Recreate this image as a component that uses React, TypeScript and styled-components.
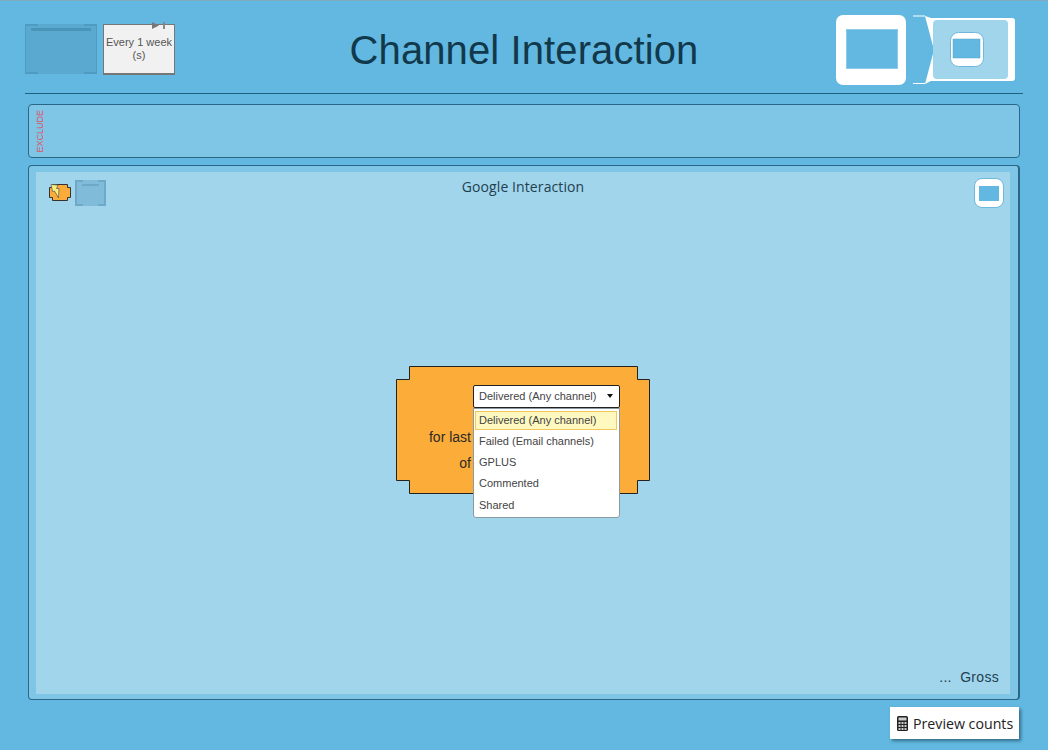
import * as React from "react";
import styled, { createGlobalStyle } from "styled-components";

const MENU_ITEMS = [
  "Delivered (Any channel)",
  "Failed (Email channels)",
  "GPLUS",
  "Commented",
  "Shared",
];

// corner brackets of the empty drop targets
const brackets = (color: string, tick: number, size: number) => `
  background-image:
    linear-gradient(${color}, ${color}), linear-gradient(${color}, ${color}),
    linear-gradient(${color}, ${color}), linear-gradient(${color}, ${color});
  background-repeat: no-repeat;
  background-size: ${tick}px ${size}px;
  background-position: 0 0, 100% 0, 0 100%, 100% 100%;
`;

export default function App() {
  return (
    <Page>
      <GlobalStyle />
      <Header>
        <HeaderLeft>
          <DropBox>
            <DropBoxLine />
          </DropBox>
          <ScheduleCard>
            <ScheduleMarks viewBox="0 0 16 8">
              <path d="M0 0 L7 3.5 L0 7 Z" fill="#777" />
              <rect x="11" y="0" width="2" height="7" fill="#888" />
            </ScheduleMarks>
            Every 1 week
            <br />
            (s)
          </ScheduleCard>
        </HeaderLeft>
        <Title>Channel Interaction</Title>
        <HeaderRight>
          <ViewSquare>
            <ViewSquareInner />
          </ViewSquare>
          <NestedView viewBox="0 0 102 70">
            <path d="M0 1 H12 M0 68.5 H12" stroke="#fff" strokeWidth="1.2" fill="none" />
            <path d="M12 1 L18 3 H99 Q102 3 102 6 V63 Q102 66 99 66 H18 L12 69 L21 35 Z" fill="#fff" />
            <rect x="20" y="5" width="75" height="59" rx="4" fill="#a1d5ec" />
            <rect x="37.5" y="17.5" width="33" height="34" rx="8" fill="#fff" stroke="#6fb8dc" />
            <rect x="40" y="24" width="27" height="19" fill="#62b8e0" stroke="#5aa6cc" strokeWidth="0.5" />
          </NestedView>
        </HeaderRight>
      </Header>

      <ExcludePanel>
        <ExcludeLabel>EXCLUDE</ExcludeLabel>
      </ExcludePanel>

      <MainPanel>
        <Canvas>
          <CanvasHeader>
            <CanvasTools>
              <svg width="25" height="22" viewBox="0 0 25 22">
                <path
                  d="M4.5 2.5 H19.5 V5.5 H22.5 V15.5 H19.5 V18.5 H4.5 V15.5 H1.5 V5.5 H4.5 Z"
                  fill="#fbab39"
                  stroke="#333"
                />
                <path d="M3 2.5 L10 3 L8.5 6.5 L11 6.5 L10.5 16 L6.5 9 L4.5 9.5 Z" fill="#f7ee7e" stroke="#555" strokeWidth="0.7" />
              </svg>
              <MiniDropBox>
                <MiniDropBoxLine />
              </MiniDropBox>
            </CanvasTools>
            <CanvasTitle>Google Interaction</CanvasTitle>
            <ExpandButton>
              <ExpandButtonInner />
            </ExpandButton>
          </CanvasHeader>

          <CanvasBody>
            <Block>
              <BlockShape viewBox="0 0 254 128">
                <path
                  d="M13.5 0.5 H241.5 V13.5 H253.5 V114.5 H241.5 V127.5 H13.5 V114.5 H0.5 V13.5 H13.5 Z"
                  fill="#fcad39"
                  stroke="#222"
                />
              </BlockShape>
              <BlockGrid>
                <span />
                <SelectWrap>
                  <SelectBox>
                    Delivered (Any channel)
                    <Caret />
                  </SelectBox>
                  <Menu>
                    {MENU_ITEMS.map((item, index) => (
                      <MenuItem key={item} $active={index === 0}>
                        {item}
                      </MenuItem>
                    ))}
                  </Menu>
                </SelectWrap>
                <BlockLabel>for last</BlockLabel>
                <span />
                <BlockLabel>of</BlockLabel>
                <span />
              </BlockGrid>
            </Block>
          </CanvasBody>

          <CanvasFooter>...&nbsp; Gross</CanvasFooter>
        </Canvas>
      </MainPanel>

      <Footer>
        <PreviewButton>
          <svg width="11" height="15" viewBox="0 0 11 15">
            <rect width="11" height="15" rx="1.5" fill="#222" />
            <rect x="1.5" y="1.5" width="8" height="3" fill="#ccc" />
            {[0, 1, 2].map((col) =>
              [0, 1, 2].map((row) => (
                <rect
                  key={`${col}-${row}`}
                  x={1.5 + col * 3}
                  y={6 + row * 3}
                  width="2"
                  height="2"
                  fill="#ccc"
                />
              ))
            )}
          </svg>
          Preview counts
        </PreviewButton>
      </Footer>
    </Page>
  );
}

const GlobalStyle = createGlobalStyle`
  html, body {
    margin: 0;
    padding: 0;
    background: #62b8e0;
    overflow: hidden;
  }
  * {
    box-sizing: border-box;
  }
`;

const Page = styled.div`
  width: 1048px;
  height: 750px;
  display: flex;
  flex-direction: column;
  background: #62b8e0;
  border-top: 1px solid #7fa9bd;
  font-family: "Liberation Sans", Arial, sans-serif;
`;

const Header = styled.header`
  width: 998px;
  height: 93px;
  margin-left: 25px;
  flex: none;
  display: grid;
  grid-template-columns: 1fr auto 1fr;
  border-bottom: 1px solid #1f5f7f;
`;

const HeaderLeft = styled.div`
  display: flex;
  gap: 6px;
  padding-top: 23px;
  align-items: flex-start;
`;

const DropBox = styled.div`
  width: 72px;
  height: 50px;
  padding: 4px 5px;
  background-color: #5aa9d0;
  border-left: 1px solid #4f9cc2;
  border-right: 1px solid #4f9cc2;
  ${brackets("#4f9cc2", 12, 2)}
`;

const DropBoxLine = styled.div`
  height: 3px;
  background: #4a94b8;
`;

const ScheduleCard = styled.div`
  position: relative;
  width: 72px;
  height: 51px;
  padding-top: 11px;
  background: #f1f1f1;
  border: 1px solid #777;
  border-bottom-width: 2px;
  color: #555;
  font-size: 11px;
  line-height: 13px;
  text-align: center;
  white-space: nowrap;
`;

const ScheduleMarks = styled.svg`
  position: absolute;
  top: -3px;
  left: 48px;
  width: 16px;
  height: 8px;
`;

const Title = styled.h1`
  margin: 27px 0 0;
  font-size: 40px;
  font-weight: 400;
  line-height: 44px;
  letter-spacing: 0.1px;
  color: #12384c;
  text-align: center;
`;

const HeaderRight = styled.div`
  justify-self: end;
  display: flex;
  gap: 7px;
  padding: 14px 8px 0 0;
  align-items: flex-start;
`;

const ViewSquare = styled.div`
  width: 70px;
  height: 70px;
  padding: 14px 8px 15px 10px;
  background: #fff;
  border-radius: 7px;
`;

const ViewSquareInner = styled.div`
  width: 52px;
  height: 40px;
  background: #62b8e0;
  box-shadow: 0 0 0 1px #8ccbe8 inset;
`;

const NestedView = styled.svg`
  width: 102px;
  height: 70px;
`;

const ExcludePanel = styled.section`
  width: 992px;
  height: 54px;
  margin: 10px 0 0 28px;
  flex: none;
  padding: 5px 0 0 6px;
  background: #7fc5e6;
  border: 1px solid #2a6685;
  border-radius: 4px;
`;

const ExcludeLabel = styled.div`
  writing-mode: vertical-rl;
  transform: rotate(180deg);
  font-size: 9px;
  line-height: 11px;
  color: #e0505f;
`;

const MainPanel = styled.section`
  width: 992px;
  height: 535px;
  margin: 7px 0 0 28px;
  flex: none;
  padding: 6px 8px 5px 7px;
  background: #7fc5e6;
  border: 1px solid #2a6685;
  border-right-width: 2px;
  border-radius: 4px;
`;

const Canvas = styled.div`
  height: 100%;
  display: flex;
  flex-direction: column;
  background: #a1d5ec;
`;

const CanvasHeader = styled.div`
  display: grid;
  grid-template-columns: 1fr auto 1fr;
  padding: 6px 6px 0;
`;

const CanvasTools = styled.div`
  display: flex;
  align-items: center;
  gap: 2px;
  height: 30px;
  padding-left: 6px;
`;

const MiniDropBox = styled.div`
  width: 31px;
  height: 26px;
  padding: 4px 5px;
  background-color: #80bcd9;
  border-left: 2px solid #6fa9c8;
  border-right: 2px solid #6fa9c8;
  ${brackets("#6fa9c8", 6, 2)}
`;

const MiniDropBoxLine = styled.div`
  height: 2px;
  background: #6fa9c8;
`;

const CanvasTitle = styled.div`
  font-family: "Open Sans", sans-serif;
  font-size: 14px;
  line-height: 18px;
  letter-spacing: 0.1px;
  color: #1f3f50;
`;

const ExpandButton = styled.div`
  justify-self: end;
  width: 30px;
  height: 30px;
  padding: 7px 4px;
  background: #fff;
  border: 1px solid #6fb8dc;
  border-radius: 8px;
`;

const ExpandButtonInner = styled.div`
  height: 15px;
  background: #62b8e0;
`;

const CanvasBody = styled.div`
  flex: 1;
  display: flex;
  align-items: center;
  justify-content: center;
  padding-bottom: 16px;
`;

const Block = styled.div`
  position: relative;
  width: 254px;
  height: 128px;
`;

const BlockShape = styled.svg`
  position: absolute;
  inset: 0;
  width: 254px;
  height: 128px;
`;

const BlockGrid = styled.div`
  position: relative;
  display: grid;
  grid-template-columns: 75px 147px;
  grid-template-rows: 23px 42px 26px;
  column-gap: 2px;
  padding-top: 19px;
  align-items: end;
`;

const BlockLabel = styled.div`
  font-size: 14px;
  line-height: 26px;
  color: #2a2a2a;
  text-align: right;
`;

const SelectWrap = styled.div`
  position: relative;
  z-index: 1;
`;

const SelectBox = styled.div`
  position: relative;
  height: 23px;
  padding-left: 5px;
  background: #fff;
  border: 1px solid #222;
  border-radius: 2px;
  font-size: 11px;
  line-height: 21px;
  color: #444;
`;

const Caret = styled.span`
  position: absolute;
  top: 8px;
  right: 6px;
  border-top: 4px solid #111;
  border-left: 3px solid transparent;
  border-right: 3px solid transparent;
`;

const Menu = styled.div`
  position: absolute;
  top: 23px;
  left: 0;
  width: 147px;
  height: 110px;
  padding: 2px 2px 0 1px;
  background: #fff;
  border: 1px solid #8a9aa3;
  border-radius: 0 0 3px 3px;
`;

const MenuItem = styled.div<{ $active?: boolean }>`
  height: ${(p) => (p.$active ? "19px" : "21.2px")};
  margin-bottom: ${(p) => (p.$active ? "1px" : "0")};
  padding-left: ${(p) => (p.$active ? "3px" : "4px")};
  background: ${(p) => (p.$active ? "#fff9bf" : "transparent")};
  border: ${(p) => (p.$active ? "1px solid #f2c85c" : "0")};
  font-size: 11px;
  line-height: ${(p) => (p.$active ? "17px" : "21px")};
  color: #444;
`;

const CanvasFooter = styled.div`
  padding: 0 11px 8px 0;
  text-align: right;
  font-size: 14px;
  line-height: 18px;
  letter-spacing: 0.3px;
  color: #1f3f50;
`;

const Footer = styled.footer`
  display: flex;
  justify-content: flex-end;
  padding: 7px 29px 0 0;
`;

const PreviewButton = styled.button`
  width: 129px;
  height: 32px;
  display: flex;
  align-items: center;
  gap: 5px;
  padding: 1px 0 0 7px;
  background: #fff;
  border: 0;
  box-shadow: 2px 2px 3px rgba(20, 60, 80, 0.6);
  font-family: "Open Sans", sans-serif;
  font-size: 14.2px;
  color: #222;
`;
